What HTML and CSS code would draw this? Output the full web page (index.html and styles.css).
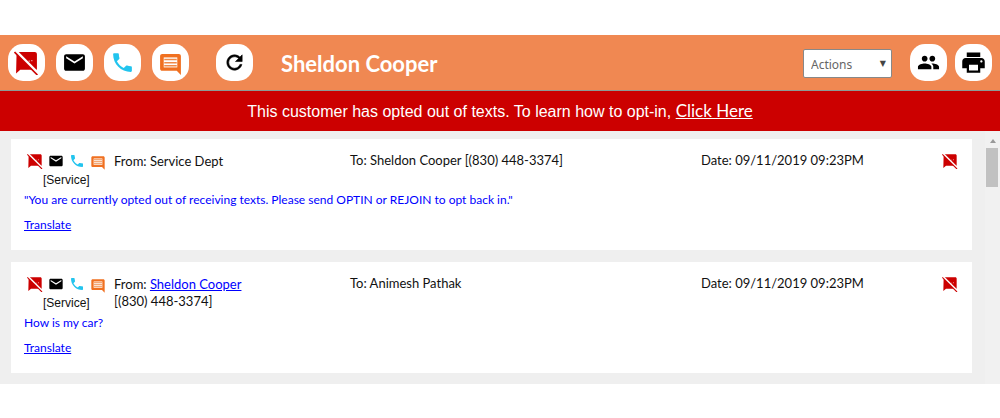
FILE: index.html
```html
<!doctype html>
<html lang="en">
<head>
  <meta charset="UTF-8">
  <meta name="viewport" content="width=device-width, initial-scale=1.0">
  <title>Sheldon Cooper - Messages</title>
  <link rel="stylesheet" href="styles.css">
</head>
<body>
  <!-- Icon shapes shared by the toolbar and the messages -->
  <svg class="sprite" aria-hidden="true">
    <symbol id="text-off" viewBox="0 0 24 24">
      <path d="M2.5 2H20c1.1 0 2 .9 2 2v15H6l-4 3.5z"/>
      <path d="M9 10h1.2v1.2H9zM14 10h1.2v1.2H14zM16.5 9.5h1.2v1.2h-1.2z" fill="#f3a0a0"/>
      <path d="M1 .5L24 23.500" stroke="#fff" stroke-width="3"/>
      <path d="M.5 2L22.5 24" stroke="#c00" stroke-width="1.6"/>
    </symbol>
    <symbol id="mail" viewBox="0 0 24 24">
      <path d="M20 4H4c-1.1 0-2 .9-2 2v12c0 1.1.9 2 2 2h16c1.1 0 2-.9 2-2V6c0-1.1-.9-2-2-2zm0 4l-8 5-8-5V6l8 5 8-5v2z"/>
    </symbol>
    <symbol id="phone" viewBox="0 0 24 24">
      <path d="M6.62 10.79c1.44 2.83 3.76 5.14 6.59 6.59l2.2-2.2c.27-.27.67-.36 1.02-.24 1.12.37 2.33.57 3.57.57.55 0 1 .45 1 1V20c0 .55-.45 1-1 1-9.39 0-17-7.61-17-17 0-.55.45-1 1-1h3.5c.55 0 1 .45 1 1 0 1.25.2 2.45.57 3.57.11.35.03.74-.25 1.02l-2.2 2.2z"/>
    </symbol>
    <symbol id="chat" viewBox="0 0 24 24">
      <path d="M21.99 4c0-1.1-.89-2-1.99-2H4c-1.1 0-2 .9-2 2v12c0 1.1.9 2 2 2h14l4 4-.01-18z"/>
      <path d="M5.500 5.2h13v9.6h-13z" fill="#fff"/>
      <path d="M6 6.5h12V8H6zM6 9.5h12V11H6zM6 12.5h12V14H6z" fill="#f08a48"/>
    </symbol>
    <symbol id="refresh" viewBox="0 0 24 24">
      <path d="M17.65 6.35C16.2 4.9 14.21 4 12 4c-4.42 0-7.99 3.58-7.99 8s3.57 8 7.99 8c3.73 0 6.84-2.55 7.73-6h-2.08c-.82 2.33-3.04 4-5.65 4-3.31 0-6-2.69-6-6s2.69-6 6-6c1.66 0 3.14.69 4.22 1.78L13 11h7V4l-2.35 2.35z" stroke="#000" stroke-width=".6"/>
    </symbol>
    <symbol id="people" viewBox="0 0 24 24">
      <path d="M16 11c1.66 0 2.99-1.34 2.99-3S17.66 5 16 5c-1.66 0-3 1.34-3 3s1.34 3 3 3zm-8 0c1.66 0 2.99-1.34 2.99-3S9.66 5 8 5C6.34 5 5 6.34 5 8s1.34 3 3 3zm0 2c-2.33 0-7 1.17-7 3.5V19h14v-2.5c0-2.33-4.67-3.5-7-3.5zm8 0c-.29 0-.62.02-.97.05 1.16.84 1.97 1.97 1.97 3.45V19h6v-2.5c0-2.33-4.67-3.5-7-3.5z"/>
    </symbol>
    <symbol id="print" viewBox="0 0 24 24">
      <path d="M19 8H5c-1.66 0-3 1.34-3 3v6h4v4h12v-4h4v-6c0-1.66-1.34-3-3-3zm-3 11H8v-5h8v5zm3-7c-.55 0-1-.45-1-1s.45-1 1-1 1 .45 1 1-.45 1-1 1zm-1-9H6v4h12V3z"/>
    </symbol>
  </svg>

  <header class="toolbar">
    <div class="channels">
      <button class="round" type="button" aria-label="Texts off"><svg class="red"><use href="#text-off"/></svg></button>
      <button class="round" type="button" aria-label="Email"><svg><use href="#mail"/></svg></button>
      <button class="round" type="button" aria-label="Call"><svg class="blue"><use href="#phone"/></svg></button>
      <button class="round" type="button" aria-label="Chat"><svg class="orange"><use href="#chat"/></svg></button>
    </div>
    <button class="round" type="button" aria-label="Refresh"><svg class="small"><use href="#refresh"/></svg></button>
    <h1>Sheldon Cooper</h1>
    <div class="actions">
      <select aria-label="Actions">
        <option>Actions</option>
      </select>
      <span class="caret">▼</span>
    </div>
    <div class="tools">
      <button class="round" type="button" aria-label="Contacts"><svg class="small"><use href="#people"/></svg></button>
      <button class="round" type="button" aria-label="Print"><svg class="large"><use href="#print"/></svg></button>
    </div>
  </header>

  <p class="notice">This customer has opted out of texts. To learn how to opt-in, <a href="#">Click Here</a></p>

  <main class="content">
    <div class="messages">
      <article class="message">
        <div class="details">
          <div class="source">
            <div class="icons">
              <svg class="red"><use href="#text-off"/></svg>
              <svg><use href="#mail"/></svg>
              <svg class="blue"><use href="#phone"/></svg>
              <svg class="orange"><use href="#chat"/></svg>
            </div>
            <div class="tag">[Service]</div>
          </div>
          <div class="from">From: Service Dept</div>
          <div class="field">To: Sheldon Cooper [(830) 448-3374]</div>
          <div class="field">Date: 09/11/2019 09:23PM</div>
          <svg class="red"><use href="#text-off"/></svg>
        </div>
        <p class="text">"You are currently opted out of receiving texts. Please send OPTIN or REJOIN to opt back in."</p>
        <a class="translate" href="#">Translate</a>
      </article>

      <article class="message">
        <div class="details">
          <div class="source">
            <div class="icons">
              <svg class="red"><use href="#text-off"/></svg>
              <svg><use href="#mail"/></svg>
              <svg class="blue"><use href="#phone"/></svg>
              <svg class="orange"><use href="#chat"/></svg>
            </div>
            <div class="tag">[Service]</div>
          </div>
          <div class="from">From: <a href="#">Sheldon Cooper</a><br>[(830) 448-3374]</div>
          <div class="field">To: Animesh Pathak</div>
          <div class="field">Date: 09/11/2019 09:23PM</div>
          <svg class="red"><use href="#text-off"/></svg>
        </div>
        <p class="text">How is my car?</p>
        <a class="translate" href="#">Translate</a>
      </article>
    </div>
    <div class="scrollbar">
      <div class="arrow"></div>
      <div class="thumb"></div>
    </div>
  </main>
</body>
</html>
```
FILE: styles.css
```css
body {
  margin: 35px 0 0;
  background-color: #fff;
  color: #111;
  font-family: Lato, sans-serif;
  font-size: 13px;
  line-height: 17px;
}

a {
  color: #00f;
}

svg {
  fill: #000;
}

.sprite {
  display: none;
}

.red {
  fill: #c00;
}

.blue {
  fill: #22c4ee;
}

.orange {
  fill: #f07020;
}

/* Top bar */
.toolbar {
  display: flex;
  align-items: center;
  padding: 9px 8px;
  background-color: #f08852;
  border-bottom: 1px solid #8c9a96;
}

.channels {
  display: flex;
  gap: 11px;
  margin-right: 27px;
}

.tools {
  display: flex;
  gap: 8px;
}

.round {
  display: flex;
  align-items: center;
  justify-content: center;
  width: 37px;
  height: 37px;
  padding: 0;
  background-color: #fff;
  border: 0;
  border-radius: 15px;
  cursor: pointer;
}

.round svg {
  width: 25px;
  height: 25px;
}

.round .small {
  width: 23px;
  height: 23px;
}

.round .large {
  width: 27px;
  height: 27px;
}

.round .orange {
  margin-top: 4px;
}

h1 {
  flex: 1;
  margin: 0 0 0 28px;
  padding-top: 2px;
  color: #fff;
  font-size: 22px;
  font-weight: bold;
  line-height: 28px;
}

.actions {
  position: relative;
  margin: 2px 18px 0 0;
}

.actions select {
  width: 89px;
  height: 29px;
  padding: 2px 7px 0;
  appearance: none;
  background-color: #fff;
  border: 1px solid #888;
  border-radius: 2px;
  color: #666;
  font-family: "Noto Sans", sans-serif;
  font-size: 12px;
}

.caret {
  position: absolute;
  top: 6px;
  right: 6px;
  color: #444;
  font-family: "DejaVu Sans", sans-serif;
  font-size: 8px;
  pointer-events: none;
}

/* Opt-out notice */
.notice {
  margin: 0;
  padding: 10px 0 9px;
  background-color: #c00;
  color: #fff;
  font-family: "Liberation Sans", Arial, sans-serif;
  font-size: 16px;
  line-height: 20px;
  text-align: center;
}

.notice a {
  color: #fff;
  font-family: Lato, sans-serif;
  font-size: 17px;
}

/* Message list */
.content {
  display: flex;
  background-color: #efefef;
}

.messages {
  flex: 1;
  display: flex;
  flex-direction: column;
  gap: 12px;
  padding: 8px 13px 11px 11px;
}

.message {
  padding: 12px 14px 17px 13px;
  background-color: #fff;
}

.details {
  display: grid;
  grid-template-columns: 90px 236fr 351fr 241fr 16px;
  height: 40px;
}

.details > svg {
  width: 16px;
  height: 16px;
  margin-top: 2px;
}

.source {
  padding-left: 3px;
}

.icons {
  display: flex;
  align-items: center;
  gap: 5px;
  height: 20px;
}

.icons svg {
  width: 16px;
  height: 16px;
}

.icons .orange {
  margin-top: 4px;
}

.tag {
  padding-left: 16px;
  font-family: "Liberation Sans", Arial, sans-serif;
  font-size: 12px;
  line-height: 18px;
}

.from {
  padding-top: 2px;
}

.field {
  padding-top: 1px;
}

.text {
  margin: 0;
  color: #00f;
  font-size: 12px;
}

.translate {
  display: block;
  width: fit-content;
  margin-top: 9px;
  font-size: 12px;
  line-height: 16px;
}

.scrollbar {
  width: 15px;
  padding-top: 8px;
  background-color: #f1f1f1;
}

.arrow {
  width: 0;
  margin: 0 auto 5px;
  border: 3px solid transparent;
  border-top: 0;
  border-bottom: 4px solid #999;
}

.thumb {
  height: 39px;
  margin: 0 2px 0 1px;
  background-color: #c1c1c1;
}
```
